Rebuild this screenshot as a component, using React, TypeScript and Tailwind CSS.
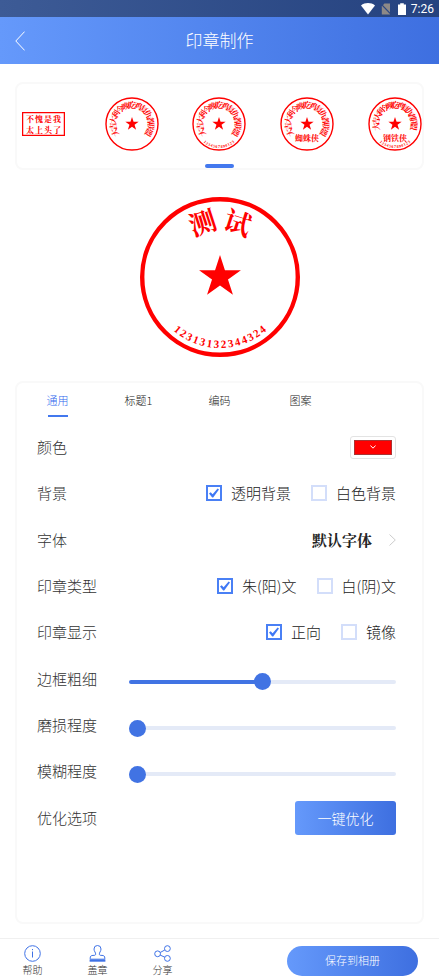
import { useState } from 'react';
import type { ReactNode } from 'react';

const TEMPLATE_TITLE = '大吉大利今晚吃鸡复仇者联盟';

type ArcTextProps = {
  text: string;
  radius: number;
  size: number;
  // half of the angle that the text covers, in degrees
  spread: number;
  bottom?: boolean;
};

// Puts each character on a circle round 0,0
function ArcText({ text, radius, size, spread, bottom = false }: ArcTextProps) {
  const chars = text.split('');
  const step = (spread * 2) / (chars.length - 1);
  return (
    <g fill="#f00" fontSize={size} fontWeight={700} textAnchor="middle">
      {chars.map((char, i) => {
        const angle = i * step - spread;
        return (
          <text key={i} y={bottom ? radius : -radius} transform={`rotate(${bottom ? -angle : angle})`}>
            {char}
          </text>
        );
      })}
    </g>
  );
}

function Star({ r }: { r: number }) {
  const points = Array.from({ length: 10 }, (_, i) => {
    const len = i % 2 === 0 ? r : r * 0.382;
    const a = (Math.PI / 5) * i;
    return `${(len * Math.sin(a)).toFixed(2)},${(-len * Math.cos(a)).toFixed(2)}`;
  });
  return <polygon points={points.join(' ')} fill="#f00" />;
}

function TemplateSeal({ code, name, spread = 117 }: { code?: string; name?: string; spread?: number }) {
  return (
    <svg
      viewBox="-27 -27 54 54"
      className="size-[54px] font-['Liberation_Serif','Noto_Serif_CJK_SC','Noto_Sans_CJK_SC',serif]"
    >
      <circle r="26" fill="none" stroke="#f00" strokeWidth="1.4" />
      <ArcText text={TEMPLATE_TITLE} radius={16} size={8} spread={spread} />
      <Star r={7} />
      {name && (
        <text y="17" fill="#f00" fontSize="8" fontWeight="700" textAnchor="middle">
          {name}
        </text>
      )}
      {code && <ArcText text={code} radius={24} size={4} spread={38} bottom />}
    </svg>
  );
}

function Row({ label, htmlFor, children }: { label: string; htmlFor?: string; children: ReactNode }) {
  return (
    <div className="flex items-center justify-between">
      {htmlFor ? <label htmlFor={htmlFor}>{label}</label> : <span>{label}</span>}
      {children}
    </div>
  );
}

type CheckPairProps = { options: [string, string]; value: number; onChange: (value: number) => void };

function CheckPair({ options, value, onChange }: CheckPairProps) {
  return (
    <div className="flex gap-5 text-[#222]">
      {options.map((option, i) => (
        <label key={option} className="flex items-center gap-[9px]">
          <span className="grid size-4 place-items-center">
            <input
              type="checkbox"
              checked={value === i}
              onChange={() => onChange(i)}
              className="peer col-start-1 row-start-1 size-4 appearance-none border-2 border-[#d3defa] checked:border-[#4a80f5]"
            />
            <svg
              viewBox="0 0 10 10"
              className="pointer-events-none invisible col-start-1 row-start-1 size-[10px] peer-checked:visible"
            >
              <path d="M0 5.4 1.7 4.2 3.6 6.2 8.6.6 10 1.6 4.2 9.4H3.2Z" fill="#3f78f5" />
            </svg>
          </span>
          {option}
        </label>
      ))}
    </div>
  );
}

type SliderProps = { id: string; value: number; onChange: (value: number) => void };

function Slider({ id, value, onChange }: SliderProps) {
  return (
    <input
      id={id}
      type="range"
      min={0}
      max={100}
      value={value}
      onChange={(e) => onChange(Number(e.target.value))}
      style={{ background: `linear-gradient(to right, #4173e3 ${value}%, #e4eaf7 ${value}%)` }}
      className="mt-1.5 ml-8 h-1 min-w-0 flex-1 appearance-none rounded-full [&::-webkit-slider-thumb]:size-[17px] [&::-webkit-slider-thumb]:appearance-none [&::-webkit-slider-thumb]:rounded-full [&::-webkit-slider-thumb]:bg-[#4173e3]"
    />
  );
}

function FooterButton({ label, children }: { label: string; children: ReactNode }) {
  return (
    <button className="flex w-[65px] flex-col items-center gap-0.5 pt-0.5 text-[10px] leading-3 font-light text-[#333]">
      <svg viewBox="0 0 17 17" fill="none" stroke="#3f72e6" className="size-[17px]">
        {children}
      </svg>
      {label}
    </button>
  );
}

const tabs = ['通用', '标题1', '编码', '图案'];

export default function App() {
  const [tab, setTab] = useState(0);
  const [background, setBackground] = useState(0);
  const [kind, setKind] = useState(0);
  const [direction, setDirection] = useState(0);
  const [border, setBorder] = useState(50);
  const [wear, setWear] = useState(0);
  const [blur, setBlur] = useState(0);

  return (
    <div className="flex min-h-screen flex-col bg-white font-['Noto_Sans_CJK_SC',sans-serif] text-[#333]">
      <div className="flex h-[17px] items-center justify-end bg-linear-to-r from-[#3d5b96] to-[#25427f] pr-[5px] text-white">
        <svg viewBox="0 0 14 12" className="h-3 w-[14px]">
          <path d="M0 2.4C4-.8 10-.8 14 2.4L7 11.6Z" fill="#fff" />
        </svg>
        <svg viewBox="0 0 10 12" className="ml-1.5 h-3 w-[10px]">
          <path d="M3.4.6H9V11.4H.8V3.4Z" fill="#8d8987" />
          <path d="M0 1 10 11.4" stroke="#2a4684" strokeWidth="1.2" />
        </svg>
        <svg viewBox="0 0 8 12" className="ml-[7px] h-3 w-2">
          <path d="M0 1.4H2.2V.2H5.8V1.4H8V12H0Z" fill="#fff" />
        </svg>
        <span className="ml-[5px] font-['Roboto',sans-serif] text-[12px] leading-4">7:26</span>
      </div>

      <header className="grid h-[47px] grid-cols-[40px_1fr_40px] items-center bg-linear-to-r from-[#6599fb] to-[#3e6fe0] text-white">
        <button aria-label="返回" className="flex h-full items-center pl-[15px]">
          <svg viewBox="0 0 10 20" className="h-5 w-[10px]">
            <path d="M9.6.6.8 10l8.8 9.4" fill="none" stroke="#fff" />
          </svg>
        </button>
        <h1 className="pb-0.5 text-center text-[17px] leading-5 font-light">印章制作</h1>
      </header>

      <section className="mx-[15px] mt-[18px] flex h-[88px] flex-col rounded-lg border-2 border-[#f9f9f9]">
        <div className="-mx-[17px] grid flex-1 grid-cols-5 place-items-center">
          <svg
            viewBox="0 0 43 24"
            className="h-6 w-[43px] font-['Noto_Serif_CJK_SC','Noto_Sans_CJK_SC',serif]"
          >
            <rect x=".6" y=".6" width="41.8" height="22.8" fill="none" stroke="#f00" strokeWidth="1.3" />
            <g fill="#f00" fontSize="8" fontWeight="700">
              <text x="4 13 22 31" y="9.5">
                不愧是我
              </text>
              <text x="4 13 22 31" y="20.5">
                太上头了
              </text>
            </g>
          </svg>
          <TemplateSeal />
          <TemplateSeal code="1234567890123" />
          <TemplateSeal name="蜘蛛侠" />
          <TemplateSeal name="钢铁侠" code="1234567890123" spread={98} />
        </div>
        <div className="h-1 w-[29px] self-center rounded-full bg-[#4378ee]" />
      </section>

      <svg
        viewBox="-80 -80 160 160"
        className="mt-[27px] size-40 self-center font-['Liberation_Serif','Noto_Serif_CJK_SC','Noto_Sans_CJK_SC',serif]"
      >
        <circle r="77.8" fill="none" stroke="#f00" strokeWidth="4.4" />
        <ArcText text="测试" radius={47} size={27} spread={18} />
        <Star r={22} />
        <ArcText text="12313132344324" radius={71} size={11} spread={39} bottom />
      </svg>

      <section className="mx-[15px] mt-6 flex-1 rounded-lg border-2 border-[#f9f9f9]">
        <div role="tablist" className="grid grid-cols-5">
          {tabs.map((name, i) => (
            <button
              key={name}
              role="tab"
              aria-selected={tab === i}
              onClick={() => setTab(i)}
              className={`flex flex-col items-center pt-2 text-[11px] leading-[18px] font-light ${
                tab === i ? 'text-[#2f68ee]' : 'text-[#222]'
              }`}
            >
              {name}
              <span className={`mt-1.5 h-0.5 w-5 ${tab === i ? 'bg-[#4378ee]' : ''}`} />
            </button>
          ))}
        </div>

        <div className="mt-[7px] grid h-[417px] auto-rows-fr pr-[26px] pl-5 text-[15px] leading-5 font-light">
          <Row label="颜色">
            <button aria-label="颜色" className="rounded-[3px] border border-[#e3e3e3] p-[3px]">
              <span className="flex h-[15px] w-[38px] items-center justify-center border border-[#a33] bg-[#f00]">
                <svg viewBox="0 0 6 4" className="h-1 w-1.5">
                  <path d="M.4.5 3 3.2 5.6.5" fill="none" stroke="#fff" />
                </svg>
              </span>
            </button>
          </Row>
          <Row label="背景">
            <CheckPair options={['透明背景', '白色背景']} value={background} onChange={setBackground} />
          </Row>
          <Row label="字体">
            <button className="flex items-center gap-[17px] font-['Noto_Serif_CJK_SC','Noto_Sans_CJK_SC',serif] font-bold text-[#222]">
              默认字体
              <svg viewBox="0 0 7 12" className="h-3 w-[7px]">
                <path d="m.5.5 5.8 5.5L.5 11.5" fill="none" stroke="#ccc" />
              </svg>
            </button>
          </Row>
          <Row label="印章类型">
            <CheckPair options={['朱(阳)文', '白(阴)文']} value={kind} onChange={setKind} />
          </Row>
          <Row label="印章显示">
            <CheckPair options={['正向', '镜像']} value={direction} onChange={setDirection} />
          </Row>
          <Row label="边框粗细" htmlFor="border">
            <Slider id="border" value={border} onChange={setBorder} />
          </Row>
          <Row label="磨损程度" htmlFor="wear">
            <Slider id="wear" value={wear} onChange={setWear} />
          </Row>
          <Row label="模糊程度" htmlFor="blur">
            <Slider id="blur" value={blur} onChange={setBlur} />
          </Row>
          <Row label="优化选项">
            <button className="h-[34px] w-[101px] rounded-[3px] bg-linear-to-r from-[#6599fb] to-[#3e6fe0] text-[14px] text-white">
              一键优化
            </button>
          </Row>
        </div>
      </section>

      <footer className="mt-[14px] flex h-[42px] items-center justify-between border-t border-[#f0f0f0] pr-[21px]">
        <div className="flex">
          <FooterButton label="帮助">
            <circle cx="8.5" cy="8.5" r="7.8" />
            <path d="M8.5 6.5V12.5M8.5 4V5.2" />
          </FooterButton>
          <FooterButton label="盖章">
            <path d="M6.6 9.5C7 7.5 5 6.5 5 4a3.5 3.5 0 0 1 7 0c0 2.5-2 3.5-1.6 5.5.2.8 1 .9 2.6.9 2 0 2.8.8 2.8 2.8v1H1.2v-1c0-2 .8-2.8 2.8-2.8 1.600 0 2.4-.1 2.6-.9Z" />
            <path d="M.6 15.6H16.4" strokeWidth="2.2" />
          </FooterButton>
          <FooterButton label="分享">
            <circle cx="3.6" cy="8.8" r="2.9" />
            <circle cx="13.4" cy="3.6" r="2.9" />
            <circle cx="13.4" cy="13.4" r="2.9" />
            <path d="M6.2 7.5 10.8 5M6.2 10.1 10.8 12.2" />
          </FooterButton>
        </div>
        <button className="mt-0.5 h-[30px] w-[131px] rounded-full bg-linear-to-r from-[#6599fb] to-[#3e6fe0] text-[11px] font-light text-white">
          保存到相册
        </button>
      </footer>
    </div>
  );
}
